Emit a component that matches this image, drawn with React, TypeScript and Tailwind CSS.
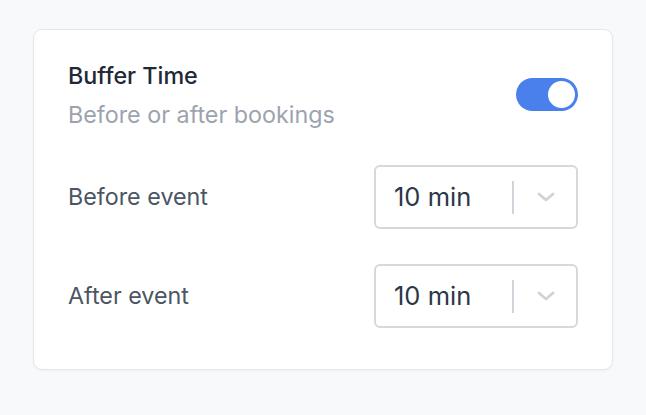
import React from "react";

function Select({ value }: { value: string }) {
  return (
    <div className="flex h-[64px] w-[204px] items-center rounded-[6px] border-2 border-[#d5d8dd] bg-white pl-[18px] pr-[21px]">
      <span className="flex-1 text-[25.5px] leading-none text-[#2d3748]">{value}</span>
      <div className="mr-[23px] h-[33px] w-[2px] bg-[#d1d5db]" />
      <svg width="18" height="10" viewBox="0 0 18 10" fill="none">
        <path d="M2 2l7 6 7-6" stroke="#cfd3d9" strokeWidth="2.8" strokeLinecap="round" strokeLinejoin="round" />
      </svg>
    </div>
  );
}

export default function App() {
  return (
    <div className="min-h-[415px] w-[646px] bg-[#f8f9fb] pl-[33px] pt-[29px]" style={{ fontFamily: "Inter, 'Noto Sans', sans-serif" }}>
      <div className="w-[580px] rounded-[9px] border border-[#e3e6ea] bg-white px-[34px] pb-[41px] pt-[32px] shadow-[0_1px_2px_rgba(0,0,0,0.04)]">
        <div className="flex items-center justify-between">
          <div className="flex flex-col">
            <span className="text-[23.3px] font-medium leading-[28px] text-[#1f2937]">Buffer Time</span>
            <span className="mt-[11px] text-[23.3px] leading-[28px] text-[#9ca3af]">Before or after bookings</span>
          </div>
          <div className="mb-[2px] flex h-[33px] w-[62px] items-center justify-end rounded-full bg-[#4a80eb] pr-[3px]">
            <div className="h-[27px] w-[27px] rounded-full bg-white" />
          </div>
        </div>
        <div className="mt-[36px] flex flex-col gap-[35px]">
          <div className="flex items-center justify-between">
            <span className="text-[23.3px] text-[#4b5563]">Before event</span>
            <Select value="10 min" />
          </div>
          <div className="flex items-center justify-between">
            <span className="text-[23.3px] text-[#4b5563]">After event</span>
            <Select value="10 min" />
          </div>
        </div>
      </div>
    </div>
  );
}
